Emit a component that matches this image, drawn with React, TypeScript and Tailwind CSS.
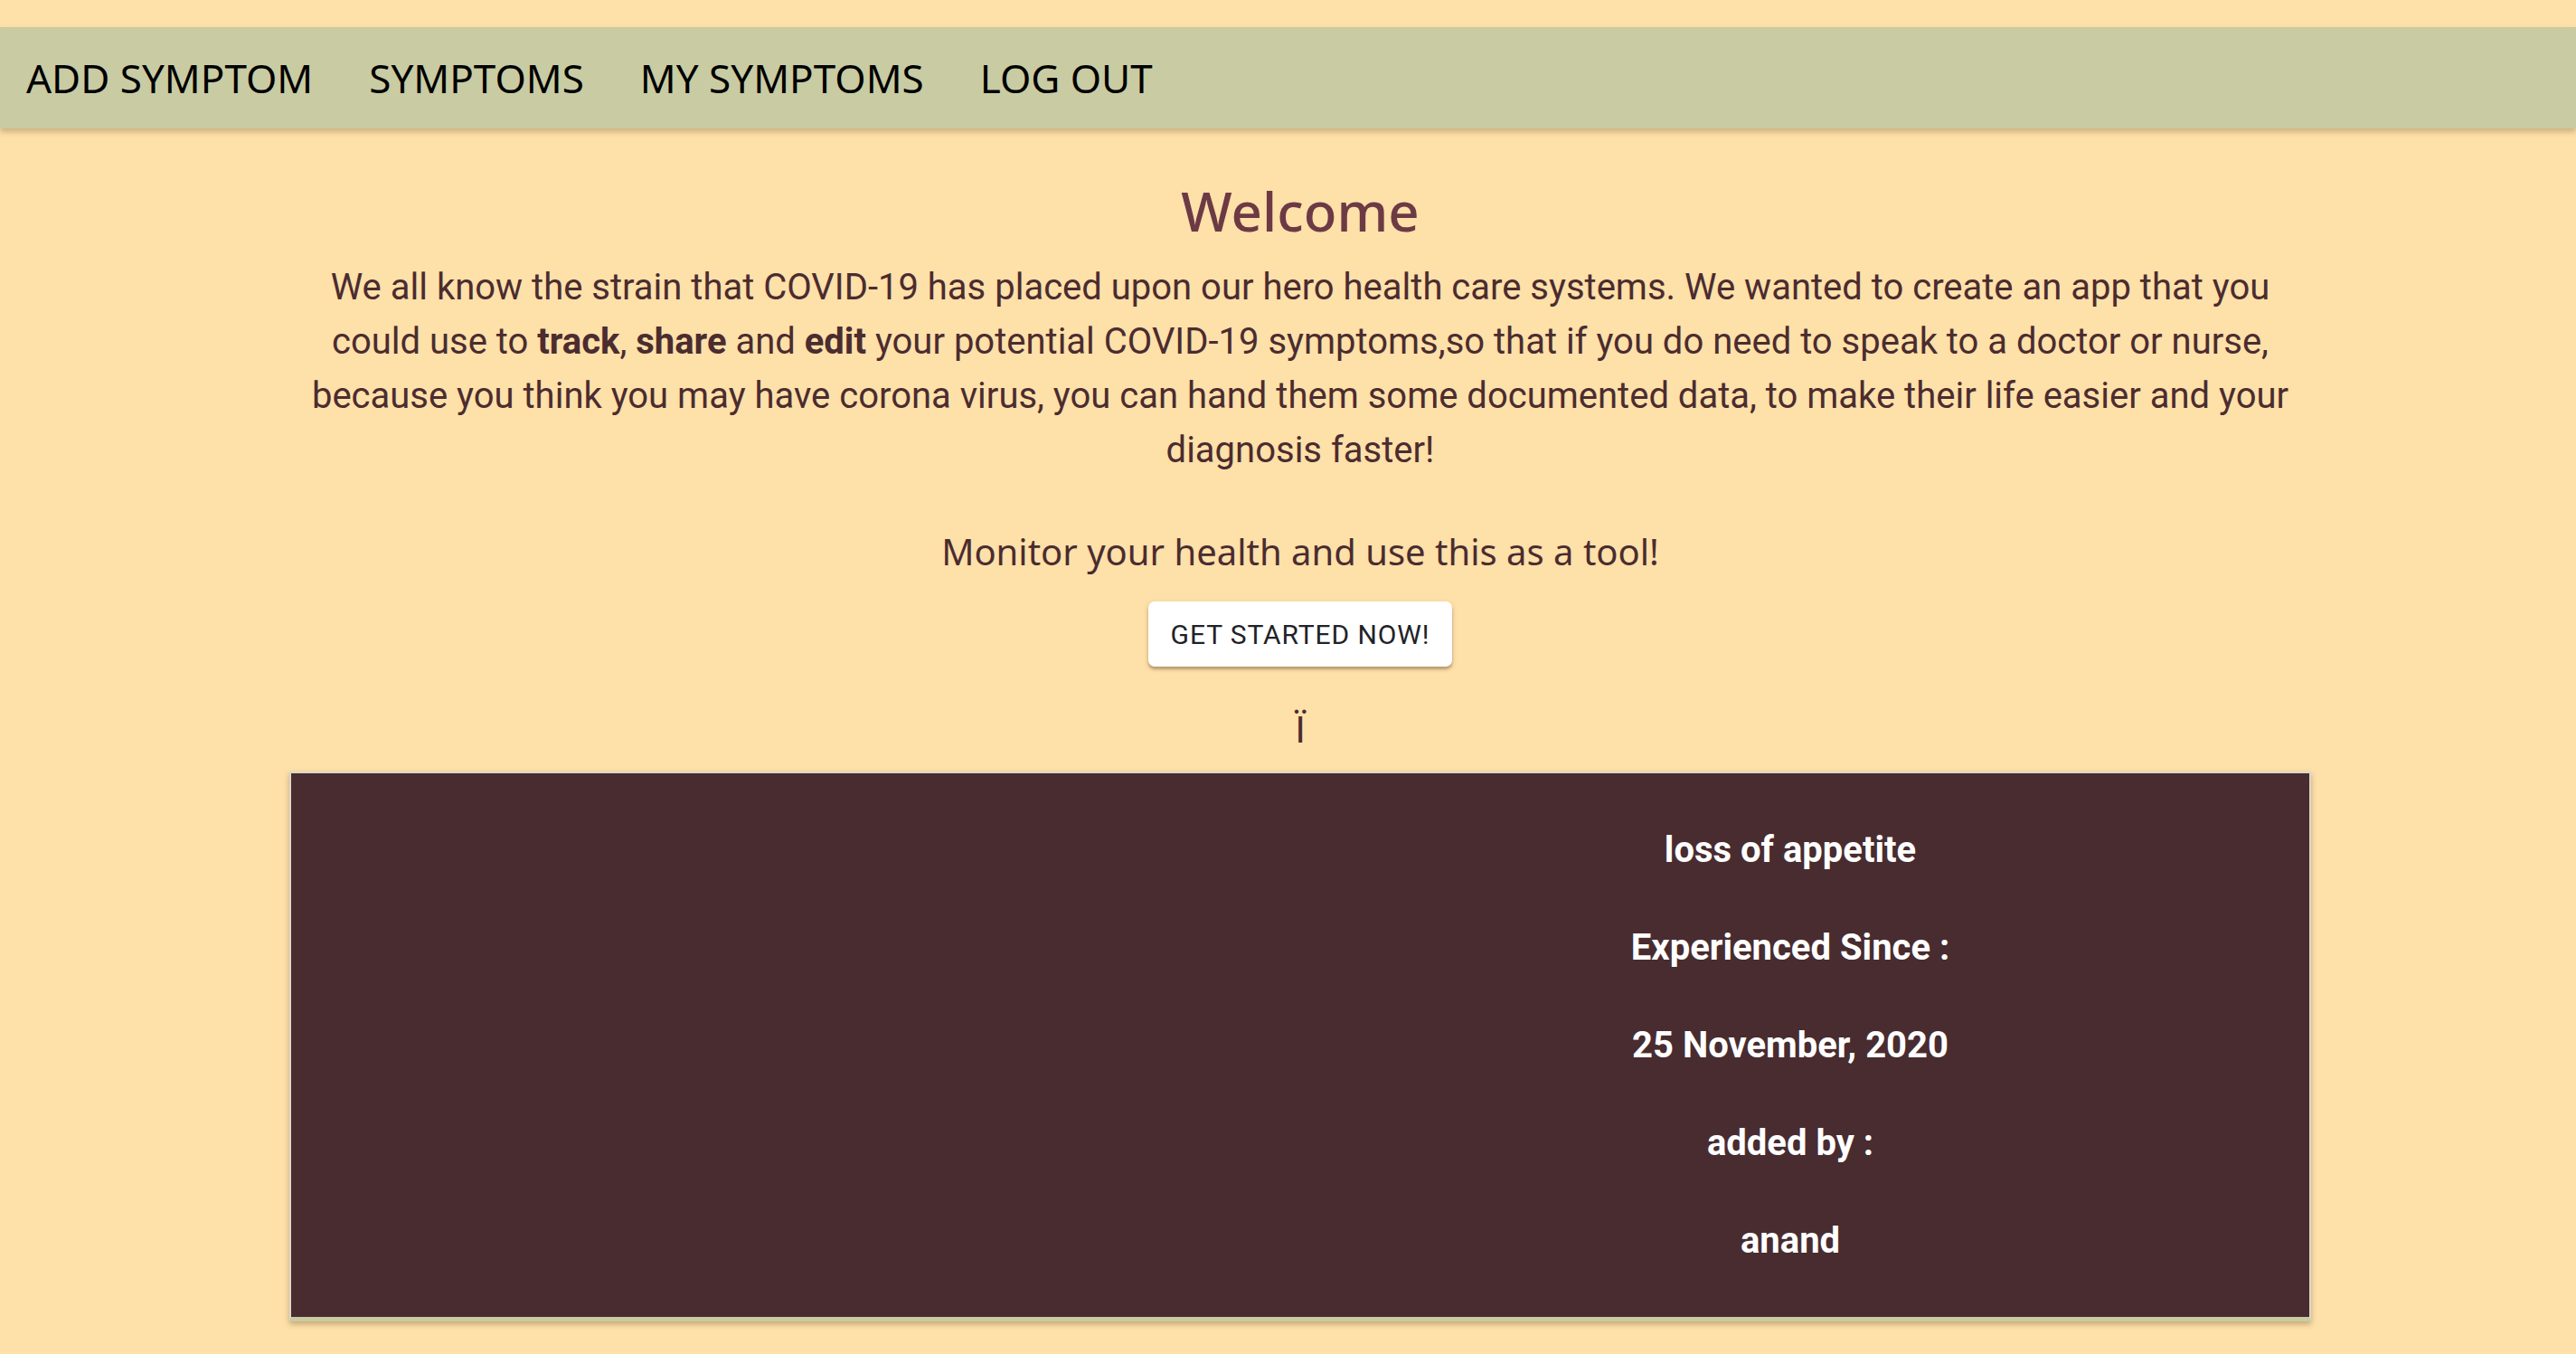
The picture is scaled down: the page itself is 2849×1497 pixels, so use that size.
import React from "react";

export default function App() {
  const quick = { fontFamily: '"Noto Sans", "Open Sans", sans-serif' };
  const roboto = { fontFamily: 'Roboto, "Liberation Sans", sans-serif' };
  return (
    <div className="min-h-[1497px] w-full bg-[#fee0a9] pt-[30px]">
      <nav
        className="flex h-[112px] items-center gap-[62px] bg-[#c9cba3] pl-[29px] text-[44px] text-black shadow-[0_4px_6px_rgba(120,90,50,0.35)]"
        style={quick}
      >
        <span>ADD SYMPTOM</span>
        <span>SYMPTOMS</span>
        <span>MY SYMPTOMS</span>
        <span>LOG OUT</span>
      </nav>

      <main className="flex flex-col items-center pl-[27px]">
        <h1
          className="mt-[55px] text-[60px] font-medium leading-[72px] text-[#6c3a45]"
          style={quick}
        >
          Welcome
        </h1>
        <p
          className="mt-[19px] w-[2236px] text-center text-[40px] leading-[60px] text-[#4b2c2f]"
          style={roboto}
        >
          We all know the strain that COVID-19 has placed upon our hero health care systems. We wanted to create an app that you could use to{" "}
          <b>track</b>, <b>share</b> and <b>edit</b> your potential COVID-19 symptoms,so that if you do need to speak to a doctor or nurse, because you think you may have corona virus, you can hand them some documented data, to make their life easier and your diagnosis faster!
        </p>
        <p
          className="mt-[58px] text-[40px] leading-[48px] text-[#4b2c2f]"
          style={quick}
        >
          Monitor your health and use this as a tool!
        </p>
        <button
          className="mt-[31px] h-[72px] w-[336px] rounded-[7px] bg-white text-[30px] font-normal tracking-[0.9px] text-[#1f2328] shadow-[0_3px_3px_rgba(90,60,30,0.35),0_2px_6px_rgba(90,60,30,0.15)]"
          style={roboto}
        >
          GET STARTED NOW!
        </button>
        <div
          className="mt-[45px] text-[40px] leading-[48px] text-[#4b2c2f]"
          style={{ fontFamily: 'Lato, "Noto Sans", sans-serif' }}
        >
          Ï
        </div>
        <div className="mt-[23px] w-[2236px] border-x-2 border-t-2 border-b-[5px] border-x-[#dcd6cc] border-t-[#dcd6cc] border-b-[#c9cba3] bg-[#482c30] shadow-[0_3px_6px_rgba(90,60,30,0.35)]">
          <div className="grid grid-cols-[1084px_1fr] pt-[31px] pb-[30px]">
            <div />
            <div
              className="flex flex-col items-center text-[40px] font-bold text-white"
              style={roboto}
            >
              <div className="leading-[108px]">loss of appetite</div>
              <div className="leading-[108px]">Experienced Since :</div>
              <div className="leading-[108px]">25 November, 2020</div>
              <div className="leading-[108px]">added by :</div>
              <div className="leading-[108px]">anand</div>
            </div>
          </div>
        </div>
      </main>
    </div>
  );
}
